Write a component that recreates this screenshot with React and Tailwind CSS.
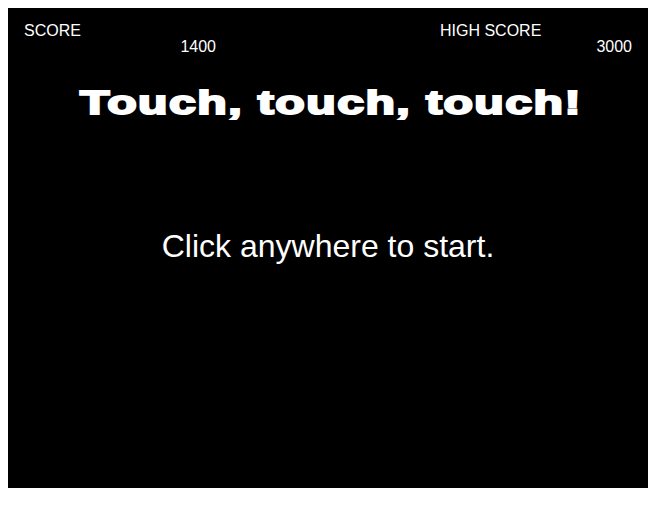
export default function App() {
  return (
    <div className="m-2 flex h-[480px] w-[640px] flex-col bg-black px-4 pt-[15px] font-['Liberation_Sans',Arial,sans-serif] text-white">
      <div className="flex justify-between">
        <div className="w-[192px] text-[16px] leading-4">
          <div>SCORE</div>
          <div className="text-right">1400</div>
        </div>
        <div className="w-[192px] text-[16px] leading-4">
          <div>HIGH SCORE</div>
          <div className="text-right">3000</div>
        </div>
      </div>
      <div className="mt-[31px] flex justify-center pl-[6px]">
        <h1 className="inline-block scale-x-[1.46] text-[33px] font-bold leading-none tracking-[1px] [-webkit-text-stroke:2px_white]">
          Touch, touch, touch!
        </h1>
      </div>
      <p className="mt-[111px] text-center text-[32px] leading-none">Click anywhere to start.</p>
    </div>
  );
}
